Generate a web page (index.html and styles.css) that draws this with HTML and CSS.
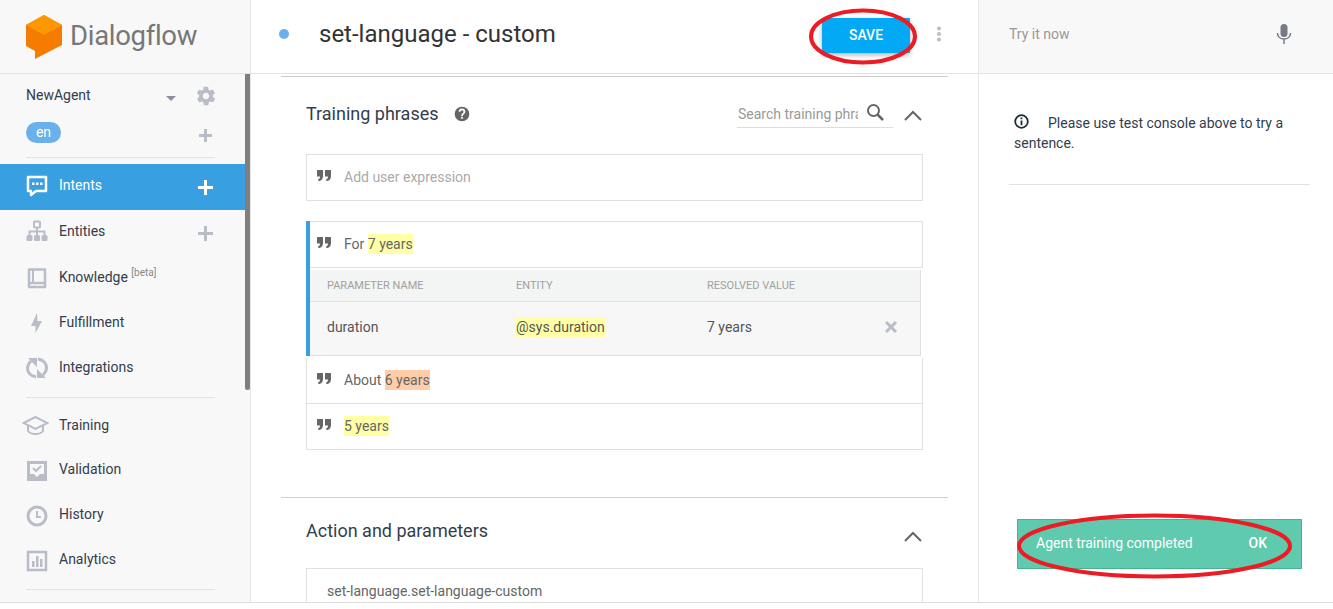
FILE: index.html
```html
<!DOCTYPE html>
<html lang="en">
    <head>
        <meta charset="UTF-8" />
        <title>Dialogflow</title>
        <link rel="stylesheet" href="styles.css">
    </head>
    <body>
        <div class="app">
            <aside class="sidebar">
                <div class="brand">
                    <svg class="brand-logo" width="36" height="46" viewBox="0 0 36 46">
                        <path d="M18 1 L36 11 V31 L9 45 V37 L0 32 V11 Z" fill="#f57c00"/>
                        <path d="M18 1 L36 11 L18 21 L0 11 Z" fill="#ff9800"/>
                    </svg>
                    <span class="brand-name">Dialogflow</span>
                </div>
                <div class="agent">
                    <span class="agent-name">NewAgent</span>
                    <span class="caret"></span>
                    <svg class="gear" width="22" height="22" viewBox="0 0 24 24"><path fill="#b9bdc8" d="M19.4 13c.1-.3.1-.7.1-1s0-.7-.1-1l2.1-1.6c.2-.2.2-.4.1-.6l-2-3.5c-.1-.2-.4-.3-.6-.2l-2.5 1c-.5-.4-1.1-.7-1.7-1l-.4-2.6c0-.3-.2-.5-.5-.5h-4c-.3 0-.5.2-.5.4l-.4 2.7c-.6.2-1.1.6-1.7 1l-2.5-1c-.2-.1-.5 0-.6.2l-2 3.5c-.1.2-.1.5.1.6L4.6 11c0 .3-.1.7-.1 1s0 .7.1 1l-2.1 1.6c-.2.2-.2.4-.1.6l2 3.5c.1.2.4.3.6.2l2.5-1c.5.4 1.1.7 1.7 1l.4 2.6c0 .3.2.5.5.5h4c.3 0 .5-.2.5-.4l.4-2.7c.6-.2 1.1-.6 1.7-1l2.5 1c.2.1.5 0 .6-.2l2-3.5c.1-.2.1-.5-.1-.6L19.4 13zM12 15.5c-1.9 0-3.5-1.6-3.5-3.5s1.6-3.5 3.5-3.5 3.5 1.6 3.5 3.5-1.6 3.5-3.5 3.5z"/></svg>
                </div>
                <div class="lang">
                    <span class="lang-pill">en</span>
                    <span class="plus plus-lang"></span>
                </div>
                <div class="side-rule"></div>
                <nav class="nav-main">
                    <div class="nav-item nav-active">
                        <svg class="nav-icon icon-up" width="22" height="22" viewBox="0 0 22 22"><path fill="none" stroke="#fff" stroke-width="2.500" stroke-linejoin="round" d="M2 2 H20 V16 H10 L5 20 V16 H2 Z"/><path fill="#fff" d="M6 7.500 h2.500 v2.500 h-2.500z M10 7.500 h2.500 v2.500 h-2.500z M14 7.500 h2.500 v2.500 h-2.500z"/></svg>
                        <span class="nav-label label-up">Intents</span>
                        <span class="plus plus-white"></span>
                    </div>
                    <div class="nav-item">
                        <svg class="nav-icon icon-up" width="22" height="22" viewBox="0 0 22 22"><rect x="8" y="1.500" width="6" height="6" rx="1" fill="none" stroke="#b9bdc8" stroke-width="2"/><path fill="none" stroke="#b9bdc8" stroke-width="2" d="M11 8 V15 M3.500 15 V11.500 H18.500 V15"/><rect x="0.500" y="15" width="6" height="6" rx="1.500" fill="#b9bdc8"/><rect x="8" y="15" width="6" height="6" rx="1.500" fill="#b9bdc8"/><rect x="15.500" y="15" width="6" height="6" rx="1.500" fill="#b9bdc8"/></svg>
                        <span class="nav-label label-up">Entities</span>
                        <span class="plus plus-low"></span>
                    </div>
                    <div class="nav-item">
                        <svg class="nav-icon" width="22" height="22" viewBox="0 0 22 22"><path fill="none" stroke="#b9bdc8" stroke-width="2.500" stroke-linejoin="round" d="M3 2.500 H19 V20 H3 Z M3 16 H19"/><path fill="#b9bdc8" d="M6 3 H8 V15 H6 Z"/></svg>
                        <span class="nav-label">Knowledge <sup class="beta">[beta]</sup></span>
                    </div>
                    <div class="nav-item">
                        <svg class="nav-icon" width="22" height="22" viewBox="0 0 22 22"><path fill="#b9bdc8" d="M11 1 L5 14 H9.500 V21 L16 9 H11.500 Z"/></svg>
                        <span class="nav-label">Fulfillment</span>
                    </div>
                    <div class="nav-item">
                        <svg class="nav-icon" width="22" height="22" viewBox="0 0 22 22"><path fill="none" stroke="#b9bdc8" stroke-width="3" d="M10 20 C4 19 1.500 15 1.500 11 C1.500 8 3 6 5 4 M12 2 C18 3 20.500 7 20.500 11 C20.500 14 19 16 17 18"/><path fill="#b9bdc8" d="M2 1 H11 V10 Z M20 21 H11 V12 Z"/></svg>
                        <span class="nav-label">Integrations</span>
                    </div>
                </nav>
                <div class="side-rule rule-mid"></div>
                <nav class="nav-tools">
                    <div class="nav-item">
                        <svg class="nav-icon icon-wide" width="27" height="20" viewBox="0 0 27 20"><path fill="none" stroke="#b9bdc8" stroke-width="2" d="M1.500 7 L13.500 1 L25.500 7 L13.500 13 Z M6 10 V15 C9 19 18 19 21 15 V10"/></svg>
                        <span class="nav-label">Training</span>
                    </div>
                    <div class="nav-item">
                        <svg class="nav-icon" width="22" height="22" viewBox="0 0 22 22"><path fill="#b9bdc8" d="M1 1 H21 V21 H1 Z"/><path fill="#f8f8f8" d="M4 4 H18 V14 H14 L11 17 L8 14 H4 Z"/><path fill="none" stroke="#b9bdc8" stroke-width="2" d="M7 8 L10 11 L15 6"/></svg>
                        <span class="nav-label label-up">Validation</span>
                    </div>
                    <div class="nav-item">
                        <svg class="nav-icon" width="22" height="22" viewBox="0 0 22 22"><circle cx="11" cy="11" r="9" fill="none" stroke="#b9bdc8" stroke-width="3"/><path fill="none" stroke="#b9bdc8" stroke-width="2" d="M11 6 V12 H15"/></svg>
                        <span class="nav-label label-up">History</span>
                    </div>
                    <div class="nav-item">
                        <svg class="nav-icon" width="22" height="22" viewBox="0 0 22 22"><path fill="none" stroke="#b9bdc8" stroke-width="2.500" d="M2 2 H20 V20 H2 Z"/><path fill="#b9bdc8" d="M6 11 H8.500 V17 H6 Z M10 6 H12.500 V17 H10 Z M14 9 H16.500 V17 H14 Z"/></svg>
                        <span class="nav-label label-up">Analytics</span>
                    </div>
                </nav>
                <div class="side-rule rule-end"></div>
                <div class="side-scroll"></div>
            </aside>

            <main class="main">
                <header class="topbar">
                    <span class="dot"></span>
                    <h1 class="intent-name">set-language - custom</h1>
                    <button class="save">SAVE</button>
                    <svg class="kebab" width="6" height="16" viewBox="0 0 6 16"><circle cx="3" cy="2.500" r="2" fill="#b9bdc8"/><circle cx="3" cy="8" r="2" fill="#b9bdc8"/><circle cx="3" cy="13.500" r="2" fill="#b9bdc8"/></svg>
                </header>

                <section class="section section-phrases">
                    <div class="section-head">
                        <h2 class="section-title">Training phrases</h2>
                        <svg class="help" width="16" height="16" viewBox="0 0 24 24"><path fill="#666" d="M12 1a11 11 0 1 0 0 22 11 11 0 0 0 0-22zm1.300 18h-2.600v-2.600h2.600V19zm2.500-7.600-1.100 1.100c-.9.9-1.400 1.600-1.400 3h-2.600v-.6c0-1.200.5-2.300 1.400-3.100l1.500-1.600c.5-.4.700-1 .7-1.700a2.300 2.300 0 0 0-4.600 0H7.100a4.900 4.900 0 0 1 9.800 0c0 1.100-.4 2.100-1.100 2.900z"/></svg>
                        <div class="search">
                            <input class="search-input" placeholder="Search training phrases">
                            <svg class="search-icon" width="19" height="19" viewBox="0 0 19 19"><circle cx="7.500" cy="7.500" r="5.500" fill="none" stroke="#666" stroke-width="2"/><path stroke="#666" stroke-width="2.500" d="M11.500 11.500 L17 17"/></svg>
                        </div>
                        <svg class="chevron" width="20" height="12" viewBox="0 0 20 12"><path fill="none" stroke="#666" stroke-width="2" d="M2 11 L10 3 L18 11"/></svg>
                    </div>

                    <div class="phrase phrase-new">
                        <svg class="quote" width="14" height="11" viewBox="0 0 14 11"><path fill="#666" d="M0 0 H6 V6 C6 9 4 11 1.500 11 L1 9.500 C2.500 9 3 8 3 6.500 H0 Z M8 0 H14 V6 C14 9 12 11 9.500 11 L9 9.500 C10.500 9 11 8 11 6.500 H8 Z"/></svg>
                        <span class="hint">Add user expression</span>
                    </div>

                    <div class="selected">
                        <div class="phrase phrase-open">
                            <svg class="quote" width="14" height="11" viewBox="0 0 14 11"><path fill="#666" d="M0 0 H6 V6 C6 9 4 11 1.500 11 L1 9.500 C2.500 9 3 8 3 6.500 H0 Z M8 0 H14 V6 C14 9 12 11 9.500 11 L9 9.500 C10.500 9 11 8 11 6.500 H8 Z"/></svg>
                            <span>For <span class="mark-yellow">7 years</span></span>
                        </div>
                        <div class="params">
                            <div class="params-row params-head">
                                <span class="col-name">PARAMETER NAME</span>
                                <span class="col-entity">ENTITY</span>
                                <span class="col-value">RESOLVED VALUE</span>
                            </div>
                            <div class="params-row params-body">
                                <span class="col-name">duration</span>
                                <span class="col-entity"><span class="mark-yellow">@sys.duration</span></span>
                                <span class="col-value">7 years</span>
                                <svg class="remove" width="12" height="12" viewBox="0 0 12 12"><path stroke="#b9bdc8" stroke-width="3" d="M1 1 L11 11 M11 1 L1 11"/></svg>
                            </div>
                        </div>
                    </div>

                    <div class="phrase phrase-rest">
                        <svg class="quote" width="14" height="11" viewBox="0 0 14 11"><path fill="#666" d="M0 0 H6 V6 C6 9 4 11 1.500 11 L1 9.500 C2.500 9 3 8 3 6.500 H0 Z M8 0 H14 V6 C14 9 12 11 9.500 11 L9 9.500 C10.500 9 11 8 11 6.500 H8 Z"/></svg>
                        <span>About <span class="mark-orange">6 years</span></span>
                    </div>
                    <div class="phrase phrase-rest">
                        <svg class="quote" width="14" height="11" viewBox="0 0 14 11"><path fill="#666" d="M0 0 H6 V6 C6 9 4 11 1.500 11 L1 9.500 C2.500 9 3 8 3 6.500 H0 Z M8 0 H14 V6 C14 9 12 11 9.500 11 L9 9.500 C10.500 9 11 8 11 6.500 H8 Z"/></svg>
                        <span class="mark-yellow">5 years</span>
                    </div>
                </section>

                <section class="section section-action">
                    <div class="section-head action-head">
                        <h2 class="section-title">Action and parameters</h2>
                        <svg class="chevron" width="20" height="12" viewBox="0 0 20 12"><path fill="none" stroke="#666" stroke-width="2" d="M2 11 L10 3 L18 11"/></svg>
                    </div>
                    <div class="action-box">set-language.set-language-custom</div>
                </section>
            </main>

            <aside class="console">
                <div class="console-top">
                    <span class="try">Try it now</span>
                    <svg width="16" height="20" viewBox="0 0 16 20"><rect x="4.500" y="0" width="7" height="13" rx="3.500" fill="#757a86"/><path fill="none" stroke="#757a86" stroke-width="1.500" d="M1.500 9 C1.500 17 14.500 17 14.500 9 M8 15 V20"/></svg>
                </div>
                <div class="console-note">
                    <p class="note">
                        <svg class="note-icon" width="15" height="15" viewBox="0 0 15 15"><circle cx="7.500" cy="7.500" r="6.300" fill="none" stroke="#222b38" stroke-width="1.800"/><path fill="#222b38" d="M6.600 3.600 H8.400 V5.300 H6.600 Z M6.600 6.400 H8.400 V11.300 H6.600 Z"/></svg>Please use test console above to try a sentence.
                    </p>
                </div>
                <div class="toast">
                    <span>Agent training completed</span>
                    <span class="toast-ok">OK</span>
                </div>
            </aside>
        </div>

        <!-- red marks drawn over the screenshot -->
        <svg class="mark mark-save" width="110" height="57" viewBox="0 0 110 57"><ellipse cx="55" cy="28.500" rx="52" ry="26" fill="none" stroke="#ed1c24" stroke-width="4"/></svg>
        <svg class="mark mark-toast" width="277" height="66" viewBox="0 0 277 66"><ellipse cx="138.500" cy="33" rx="135.500" ry="30.500" fill="none" stroke="#ed1c24" stroke-width="4"/></svg>
    </body>
</html>
```

FILE: styles.css
```css
* {
    box-sizing: border-box;
}
body {
    margin: 0;
    background: #fff;
    font-family: Roboto, "Liberation Sans", sans-serif;
    font-size: 14px;
    color: #333d4d;
}
.app {
    display: flex;
    height: 603px;
    border-bottom: 1px solid #dddde0;
    overflow: hidden;
}

/* sidebar */
.sidebar {
    position: relative;
    flex: none;
    width: 251px;
    background: #f8f8f8;
    border-right: 1px solid #e6e6e6;
}
.brand {
    display: flex;
    align-items: center;
    gap: 8px;
    height: 74px;
    padding: 0 0 0 26px;
    border-bottom: 1px solid #e2e2e2;
}
.brand-name {
    margin-top: -2px;
    font-size: 27.5px;
    letter-spacing: -0.3px;
    color: #777;
}
.agent {
    display: flex;
    align-items: center;
    height: 44px;
    padding: 0 33px 2px 26px;
}
.agent-name {
    flex: 1;
}
.caret {
    width: 0;
    height: 0;
    margin: 6px 19px 0 0;
    border: 5px solid transparent;
    border-top: 5px solid #8b90a0;
    border-bottom: 0;
}
.gear {
    margin-top: 2px;
}
.lang {
    display: flex;
    align-items: center;
    justify-content: space-between;
    height: 39px;
    padding: 0 38px 10px 26px;
}
.lang-pill {
    width: 35px;
    height: 21px;
    border-radius: 11px;
    background: #6ab0ec;
    color: #fff;
    text-align: center;
    line-height: 20px;
}
.side-rule {
    height: 1px;
    margin: 0 35px 0 26px;
    background: #e2e2e2;
}
.nav-main {
    margin-top: 6px;
}
.nav-item {
    display: flex;
    align-items: center;
    width: 245px;
    height: 45px;
    padding: 0 32px 0 26px;
}
.nav-active {
    height: 46px;
    background: #389fe0;
    color: #fff;
}
.nav-icon {
    flex: none;
    margin-right: 11px;
}
.icon-up {
    margin-top: -3px;
}
.icon-wide {
    margin: 0 10px 0 -4px;
}
.nav-label {
    flex: 1;
    margin-top: -2px;
}
.label-up {
    margin-top: -4px;
}
.beta {
    font-size: 10px;
    color: #888;
    line-height: 0;
}
.plus {
    position: relative;
    width: 15px;
    height: 15px;
    background:
        linear-gradient(#b9bdc8, #b9bdc8) center / 100% 3px no-repeat,
        linear-gradient(#b9bdc8, #b9bdc8) center / 3px 100% no-repeat;
}
.plus-white {
    background:
        linear-gradient(#fff, #fff) center / 100% 3px no-repeat,
        linear-gradient(#fff, #fff) center / 3px 100% no-repeat;
}
.plus-low {
    margin-top: 2px;
}
.plus-lang {
    width: 13px;
    height: 13px;
    margin-top: 5px;
}
.rule-mid {
    margin-top: 7px;
}
.nav-tools {
    margin-top: 5px;
}
.rule-end {
    margin-top: 6px;
}
.side-scroll {
    position: absolute;
    top: 74px;
    right: 0;
    width: 5px;
    height: 316px;
    border-radius: 0 0 3px 3px;
    background: #7f7f7f;
}

/* intent editor */
.main {
    flex: none;
    width: 728px;
    border-right: 1px solid #e6e6e6;
}
.topbar {
    display: flex;
    align-items: center;
    height: 74px;
    padding: 0 36px 0 28px;
    border-bottom: 1px solid #e2e2e2;
}
.dot {
    width: 10px;
    height: 10px;
    margin-top: -6px;
    border-radius: 50%;
    background: #6ab0ec;
}
.intent-name {
    flex: 1;
    margin: -6px 0 0 30px;
    font-size: 24px;
    font-weight: 400;
    color: #333;
}
.save {
    width: 88px;
    height: 35px;
    margin-top: -3px;
    border: 0;
    background: #03a9f4;
    box-shadow: 0 2px 5px rgba(0, 0, 0, 0.3);
    color: #fff;
    font: 500 14px Roboto, sans-serif;
}
.kebab {
    margin: -6px 0 0 26px;
}
.section {
    margin: 0 30px;
    padding: 0 25px;
    border-top: 1px solid #cfc8c8;
}
.section-phrases {
    margin-top: 2px;
    height: 421px;
}
.section-action {
    border-top-color: #cfcfcf;
}
.section-head {
    display: flex;
    align-items: center;
    height: 77px;
    padding-bottom: 4px;
}
.section-title {
    margin: 0;
    font-size: 18px;
    font-weight: 400;
    color: #333d4d;
}
.help {
    margin-left: 15px;
}
.search {
    display: flex;
    align-items: center;
    gap: 8px;
    width: 156px;
    height: 29px;
    margin-left: auto;
    border-bottom: 1px solid #ddd;
}
.search-input {
    width: 121px;
    height: 28px;
    margin-top: 2px;
    padding: 0 0 0 1px;
    border: 0;
    outline: 0;
    background: none;
    font: 14px Roboto, sans-serif;
}
.search-input::placeholder {
    color: #999;
    opacity: 1;
}
.search-icon {
    margin-top: -2px;
}
.chevron {
    margin: 2px 0 0 10px;
}
.phrase {
    display: flex;
    align-items: center;
    height: 47px;
    padding: 0 0 2px 10px;
    border: 1px solid #e0e0e0;
    color: #666;
}
.quote {
    flex: none;
    margin: -3px 13px 0 0;
}
.hint {
    color: #aaa;
}
.mark-yellow {
    padding: 2px 0;
    background: #ffffa6;
}
.mark-orange {
    padding: 2px 0;
    background: #ffcda8;
}
.phrase-new {
    margin-bottom: 20px;
}
.selected {
    border-left: 4px solid #389fe0;
}
.phrase-open {
    padding-left: 7px;
    border-left: 0;
}
.params {
    width: 611px;
    margin-top: 2px;
    border-right: 1px solid #e0e0e0;
    border-bottom: 1px solid #e0e0e0;
    margin-bottom: 2px;
}
.params-row {
    position: relative;
    display: flex;
    align-items: center;
    padding-left: 17px;
}
.params-head {
    height: 32px;
    border-bottom: 1px solid #e0e0e0;
    background: #f3f5f4;
    font-size: 11px;
    color: #a0a0a0;
}
.params-body {
    height: 53px;
    padding-bottom: 4px;
    background: #f7f7f7;
    color: #555;
}
.col-name {
    width: 189px;
}
.col-entity {
    width: 191px;
}
.remove {
    margin-left: 133px;
}
.phrase-rest {
    height: 46px;
    border-top: 0;
}
.action-head {
    height: 70px;
    padding-bottom: 6px;
    justify-content: space-between;
}
.action-head .chevron {
    margin-top: 12px;
}
.action-box {
    height: 60px;
    padding: 14px 20px;
    border: 1px solid #e0e0e0;
    color: #666;
}

/* test console */
.console {
    position: relative;
    flex: 1;
}
.console-top {
    display: flex;
    align-items: center;
    justify-content: space-between;
    height: 74px;
    padding: 0 41px 6px 30px;
    background: #f8f8f8;
    border-bottom: 1px solid #e2e2e2;
}
.try {
    color: #999;
}
.console-note {
    margin: 0 23px 0 30px;
    padding: 39px 0 31px 5px;
    border-bottom: 1px solid #e2e2e2;
}
.note {
    margin: 0;
    line-height: 20px;
}
.note-icon {
    margin-right: 19px;
    vertical-align: -1px;
}
.toast {
    position: absolute;
    top: 519px;
    left: 38px;
    display: flex;
    justify-content: space-between;
    width: 285px;
    height: 50px;
    padding: 15px 34px 0 18px;
    background: #5fcaae;
    border: 1px solid #45b58f;
    color: #fff;
}
.toast-ok {
    font-weight: 500;
}

/* red marks */
.mark {
    position: absolute;
}
.mark-save {
    top: 8px;
    left: 808px;
}
.mark-toast {
    top: 513px;
    left: 1016px;
}
```
